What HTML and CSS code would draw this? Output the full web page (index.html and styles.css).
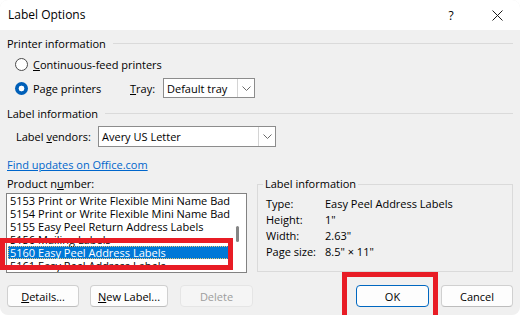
FILE: index.html
```html
<!DOCTYPE html>
<html>
<head>
<meta charset="utf-8">
<link rel="stylesheet" href="styles.css">
</head>
<body>
<div class="window">
  <div class="titlebar">
    <span class="title">Label Options</span>
    <span class="tb-btn help">?</span>
    <span class="tb-btn close"><svg width="11" height="11" viewBox="0 0 11 11"><path d="M0.5 0.5 L10.5 10.5 M10.5 0.5 L0.5 10.5" stroke="#1a1a1a" stroke-width="1" fill="none"/></svg></span>
  </div>
  <div class="content">
    <div class="section-head"><span>Printer information</span></div>
    <div class="radio-row r1"><span class="radio"></span><span><u>C</u>ontinuous-feed printers</span></div>
    <div class="radio-row r2">
      <div class="radio-opt"><span class="radio checked"></span><span>Pa<u>g</u>e printers</span></div>
      <span class="tray-label"><u>T</u>ray:</span>
      <div class="select tray"><span class="select-text">Default tray</span><span class="select-arrow"><svg width="9" height="5" viewBox="0 0 9 5"><path d="M0.5 0.5 L4.5 4.5 L8.5 0.5" stroke="#6a6a6a" stroke-width="1" fill="none"/></svg></span></div>
    </div>
    <div class="section-head second"><span>Label information</span></div>
    <div class="vendor-row">
      <span class="vendor-label">Label <u>v</u>endors:</span>
      <div class="select vendor"><span class="select-text">Avery US Letter</span><span class="select-arrow"><svg width="9" height="5" viewBox="0 0 9 5"><path d="M0.5 0.5 L4.5 4.5 L8.5 0.5" stroke="#6a6a6a" stroke-width="1" fill="none"/></svg></span></div>
    </div>
    <a class="link">Find updates on Office.com</a>
    <div class="main">
      <div class="product">
        <div class="product-label">Product n<u>u</u>mber:</div>
        <div class="listbox">
          <div class="items">
            <div class="item">5153 Print or Write Flexible Mini Name Bad</div>
            <div class="item">5154 Print or Write Flexible Mini Name Bad</div>
            <div class="item">5155 Easy Peel Return Address Labels</div>
            <div class="item">5156 Mailing Labels</div>
            <div class="item selected">5160 Easy Peel Address Labels</div>
            <div class="item">5161 Easy Peel Address Labels</div>
          </div>
          <div class="scroll"><div class="thumb"></div></div>
        </div>
      </div>
      <fieldset class="info">
        <legend>Label information</legend>
        <div class="info-grid">
          <span>Type:</span><span>Easy Peel Address Labels</span>
          <span>Height:</span><span>1"</span>
          <span>Width:</span><span>2.63"</span>
          <span>Page size:</span><span>8.5" × 11"</span>
        </div>
      </fieldset>
    </div>
    <div class="buttons">
      <button class="btn details"><u>D</u>etails...</button>
      <button class="btn newlabel"><u>N</u>ew Label...</button>
      <button class="btn delete" disabled>Delete</button>
      <span class="spacer"></span>
      <button class="btn ok">OK</button>
      <button class="btn cancel">Cancel</button>
    </div>
  </div>
  <div class="mark mark-list"></div>
  <div class="mark mark-ok"></div>
</div>
</body>
</html>
```
FILE: styles.css
```css
html, body {
  margin: 0;
  padding: 0;
  background: #ffffff;
}
body {
  font-family: "Open Sans", "Noto Sans", sans-serif;
  font-size: 11px;
  color: #000;
}
.window {
  position: relative;
  width: 520px;
  height: 315px;
  background: #f0f0f0;
  border-radius: 8px;
  overflow: hidden;
}
.titlebar {
  height: 30px;
  background: #fff;
  display: flex;
  align-items: center;
  padding-left: 8px;
}
.title {
  flex: 1;
  font-size: 12px;
  line-height: 16px;
}
.tb-btn {
  width: 46px;
  display: flex;
  justify-content: center;
  align-items: center;
  height: 30px;
}
.help {
  font-size: 12px;
}
.content {
  padding: 5px 7px 0 7px;
}
.section-head {
  display: flex;
  align-items: center;
  height: 16px;
  gap: 7px;
}
.section-head::after {
  content: "";
  flex: 1;
  border-top: 1px solid #dadada;
}
.section-head.second {
  margin-top: 7px;
}
.radio-row {
  display: flex;
  align-items: center;
  padding-left: 8px;
}
.r1 {
  margin-top: 5px;
  height: 16px;
}
.r2 {
  margin-top: 6px;
  height: 20px;
}
.radio-opt {
  display: flex;
  align-items: center;
  width: 115px;
}
.radio {
  width: 13px;
  height: 13px;
  box-sizing: border-box;
  border-radius: 50%;
  border: 1px solid #4a4a4a;
  background: #fff;
  margin-right: 5px;
  flex: none;
}
.radio.checked {
  border: none;
  background: radial-gradient(circle, #fff 0, #fff 2.6px, #005fb8 3.2px);
}
.tray-label {
  width: 33px;
}
.select {
  display: flex;
  align-items: center;
  background: #fff;
  border: 1px solid #8c8c8c;
  box-sizing: border-box;
}
.select-text {
  flex: 1;
  padding-left: 3px;
}
.select-arrow {
  width: 16px;
  align-self: stretch;
  display: flex;
  align-items: center;
  justify-content: center;
  border-left: 1px solid #d4d4d4;
}
.tray {
  width: 92px;
  height: 20px;
}
.vendor-row {
  margin-top: 5px;
  height: 21px;
  display: flex;
  align-items: center;
  padding-left: 9px;
}
.vendor-label {
  width: 82px;
}
.vendor {
  width: 178px;
  height: 21px;
}
.link {
  display: block;
  width: max-content;
  margin-top: 10px;
  line-height: 16px;
  color: #0066cc;
  text-decoration: underline;
}
.main {
  margin-top: 3px;
  display: flex;
  align-items: flex-start;
}
.product {
  width: 241px;
  margin-left: -1px;
}
.product-label {
  line-height: 16px;
  padding-left: 1px;
}
.listbox {
  margin-top: 1px;
  height: 80px;
  box-sizing: border-box;
  border: 1px solid #828282;
  background: #fff;
  display: flex;
}
.items {
  flex: 1;
  min-width: 0;
  overflow: hidden;
  padding: 0 2px 0 1px;
}
.item {
  height: 13px;
  line-height: 13px;
  padding-left: 2px;
  white-space: nowrap;
}
.item.selected {
  background: #0078d7;
  color: #fff;
  outline: 1px dotted #e8c877;
  outline-offset: -1px;
}
.scroll {
  width: 15px;
  padding-top: 32px;
  display: flex;
  justify-content: center;
}
.thumb {
  width: 3px;
  height: 16px;
  margin-right: 2px;
  background: #858585;
  border-radius: 2px;
}
.info {
  flex: 1;
  min-width: 0;
  margin: 0 0 0 10px;
  padding: 0 0 0 5px;
  border: 1px solid #dadada;
  height: 96px;
  box-sizing: border-box;
}
.info legend {
  padding: 0 2px;
  line-height: 16px;
}
.info-grid {
  display: grid;
  grid-template-columns: 59px auto;
  line-height: 15px;
  row-gap: 1px;
  padding-top: 4px;
  padding-left: 3px;
}
.buttons {
  margin-top: 12px;
  display: flex;
  gap: 11px;
}
.spacer {
  flex: 1;
}
.btn {
  font-family: inherit;
  font-size: 11px;
  color: #000;
  height: 22px;
  padding: 0;
  background: #fdfdfd;
  border: 1px solid #d0d0d0;
  border-bottom-color: #bdbdbd;
  border-radius: 4px;
}
.details { width: 72px; }
.newlabel { width: 78px; }
.delete {
  width: 73px;
  margin-left: 1px;
  color: #9d9d9d;
  background: #f5f5f5;
  border-color: #e5e5e5;
}
.ok {
  width: 73px;
  border-color: #0067c0;
}
.cancel {
  width: 72px;
  margin-left: 1px;
}
.mark {
  position: absolute;
  box-sizing: border-box;
  border: 5px solid #e81c25;
}
.mark-list {
  left: 0;
  top: 238px;
  width: 233px;
  height: 32px;
}
.mark-ok {
  left: 342px;
  top: 272px;
  width: 96px;
  height: 50px;
}
```
